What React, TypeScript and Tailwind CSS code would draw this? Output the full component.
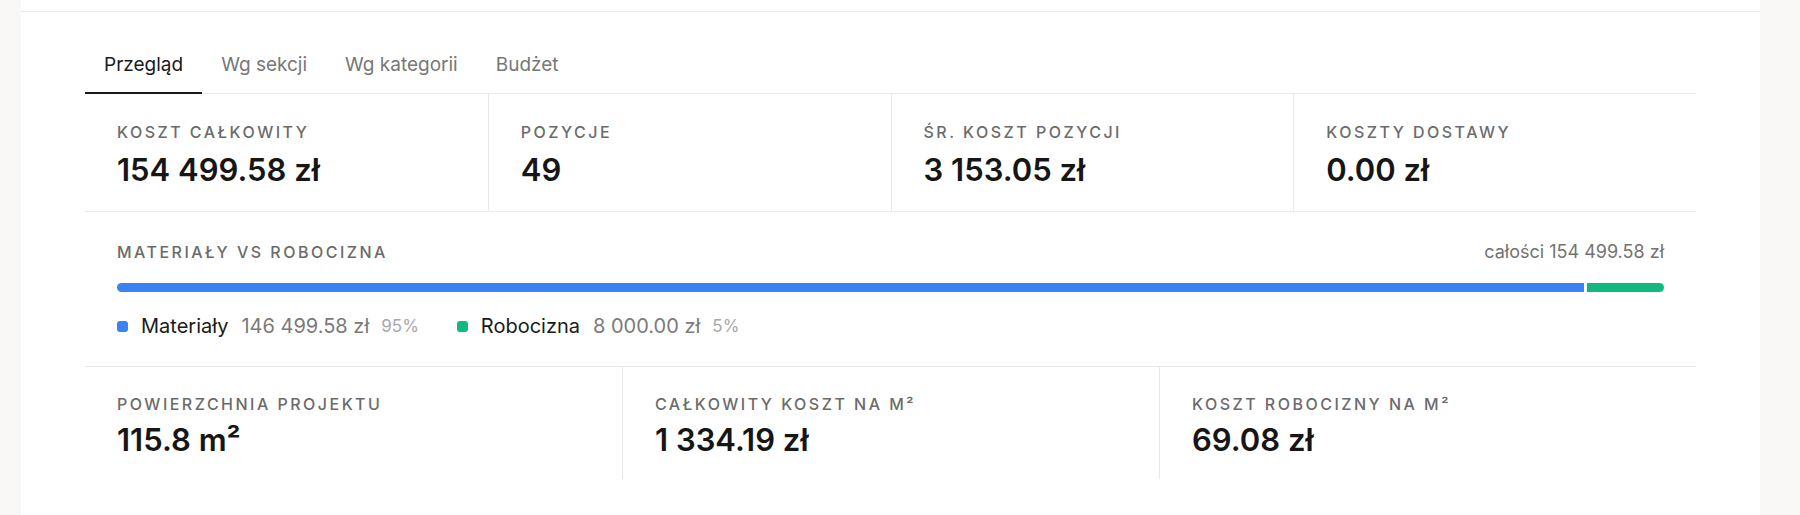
import { useState } from 'react';

const tabs = ['Przegląd', 'Wg sekcji', 'Wg kategorii', 'Budżet'];

const topStats = [
  { label: 'Koszt całkowity', value: '154 499.58 zł' },
  { label: 'Pozycje', value: '49' },
  { label: 'Śr. koszt pozycji', value: '3 153.05 zł' },
  { label: 'Koszty dostawy', value: '0.00 zł' },
];

const areaStats = [
  { label: 'Powierzchnia projektu', value: '115.8 m²' },
  { label: 'Całkowity koszt na m²', value: '1 334.19 zł' },
  { label: 'Koszt robocizny na m²', value: '69.08 zł' },
];

const split = [
  { name: 'Materiały', amount: '146 499.58 zł', pct: 95, dot: 'bg-[#3b82f6]' },
  { name: 'Robocizna', amount: '8 000.00 zł', pct: 5, dot: 'bg-[#10b981]' },
];

export default function App() {
  const [active, setActive] = useState(0);

  return (
    <div
      className="flex min-h-[515px] w-full bg-[#f9f8f6] pl-[21px] pr-[40px]"
      style={{ fontFamily: 'Inter, "Noto Sans", "Liberation Sans", sans-serif' }}
    >
      <main className="flex-1 bg-white">
        {/* bottom edge of the header card above */}
        <div className="h-[12px] border-b border-[#e8e8e8]" />

        <div className="px-16 pt-[40px]">
          {/* Tabs */}
          <div className="flex border-b border-[#e8e8e8]">
            {tabs.map((t, i) => (
              <button
                key={t}
                onClick={() => setActive(i)}
                className={`-mb-px border-b-2 px-[19px] pb-[14px] text-[19px] leading-[26px] ${
                  i === active
                    ? 'border-[#1a1a1a] text-[#1a1a1a]'
                    : 'border-transparent text-[#777777]'
                }`}
              >
                {t}
              </button>
            ))}
          </div>

          {/* Summary stats */}
          <div className="grid grid-cols-4 border-b border-[#e8e8e8]">
            {topStats.map((s, i) => (
              <div
                key={s.label}
                className={`px-8 pt-[28px] pb-[23px] ${i > 0 ? 'border-l border-[#e8e8e8]' : ''}`}
              >
                <p className="text-[16px] font-medium leading-[20px] uppercase tracking-[0.155em] text-[#6b6b6b]">
                  {s.label}
                </p>
                <p className="mt-[10px] text-[31px] font-semibold leading-[36px] text-[#161616]">
                  {s.value}
                </p>
              </div>
            ))}
          </div>

          {/* Materials vs labour */}
          <div className="border-b border-[#e8e8e8] px-8 pt-[30px] pb-[28px]">
            <div className="flex items-center justify-between">
              <p className="text-[16px] font-medium leading-[20px] uppercase tracking-[0.155em] text-[#6b6b6b]">
                Materiały vs robocizna
              </p>
              <p className="text-[18px] leading-[20px] text-[#737373]">całości 154 499.58 zł</p>
            </div>

            <div className="mt-[21px] flex h-[9px] gap-[3px]">
              <div className="h-full rounded-l-full bg-[#3b82f6]" style={{ flexGrow: 95 }} />
              <div className="h-full rounded-r-full bg-[#10b981]" style={{ flexGrow: 5 }} />
            </div>

            <div className="mt-[22px] flex items-center gap-[38px]">
              {split.map((p) => (
                <div key={p.name} className="flex items-center">
                  <span className={`h-[11px] w-[11px] rounded-[3px] ${p.dot}`} />
                  <span className="ml-[13px] text-[20px] leading-[24px] text-[#1a1a1a]">{p.name}</span>
                  <span className="ml-[13px] text-[20px] leading-[24px] text-[#7a7a7a]">{p.amount}</span>
                  <span className="ml-[12px] text-[17px] leading-[24px] text-[#a8a8a8]">{p.pct}%</span>
                </div>
              ))}
            </div>
          </div>

          {/* Per-area stats */}
          <div className="grid grid-cols-3">
            {areaStats.map((s, i) => (
              <div
                key={s.label}
                className={`px-8 pt-[27px] pb-[22px] ${i > 0 ? 'border-l border-[#e8e8e8]' : ''}`}
              >
                <p className="text-[16px] font-medium leading-[20px] uppercase tracking-[0.155em] text-[#6b6b6b]">
                  {s.label}
                </p>
                <p className="mt-[8px] text-[31px] font-semibold leading-[35px] text-[#161616]">
                  {s.value}
                </p>
              </div>
            ))}
          </div>
        </div>
      </main>
    </div>
  );
}
